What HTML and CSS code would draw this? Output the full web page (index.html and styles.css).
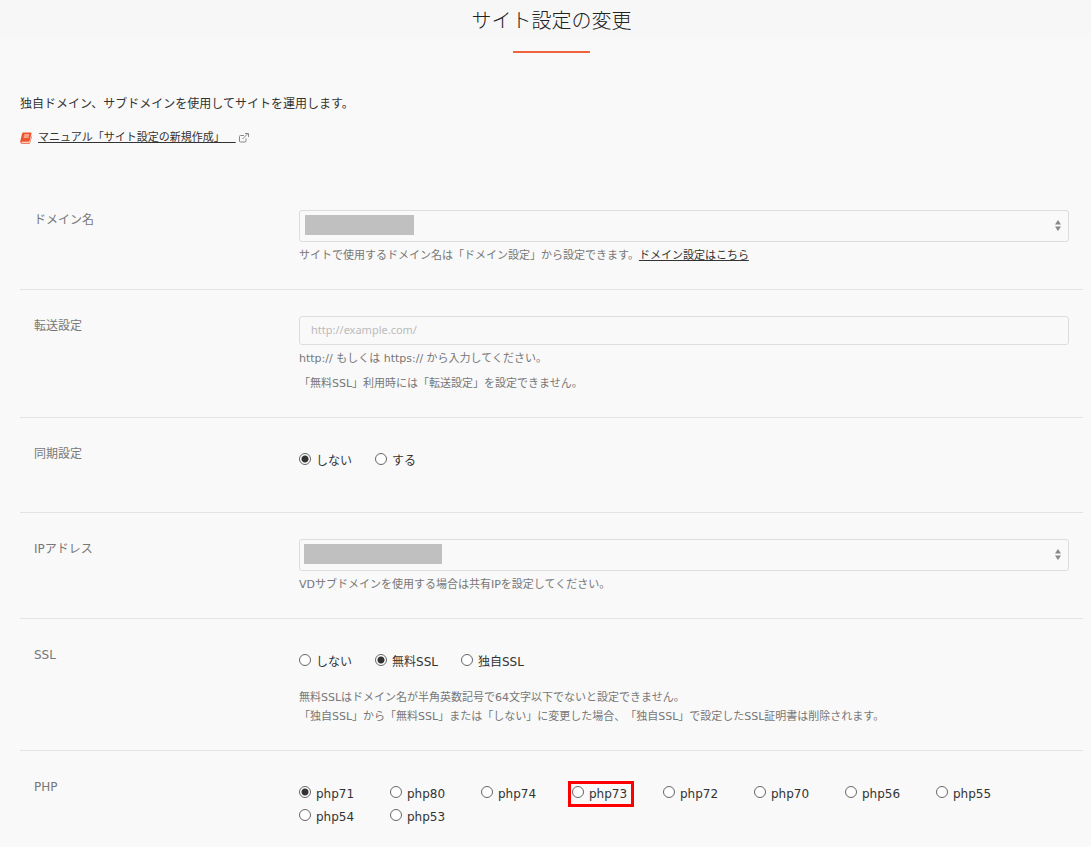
FILE: index.html
```html
<!DOCTYPE html>
<html lang="ja">
<head>
<meta charset="utf-8">
<meta name="viewport" content="width=device-width, initial-scale=1">
<title>サイト設定の変更</title>
<link rel="stylesheet" href="styles.css">
</head>
<body>
<header class="page-header"><h1>サイト設定の変更</h1></header>
<main class="page">
  <div class="accent"></div>
  <p class="lead">独自ドメイン、サブドメインを使用してサイトを運用します。</p>
  <p class="manual">
    <svg class="book" viewBox="0 0 12 12" aria-hidden="true"><path fill="#f0532d" d="M3.3.5h7.500q.9 0 .7.9L9.700 9q-.2.7-.9.7H2.200q-.7 0-.7.5t.8.5h7l.6-.5L11.400 4q.6.3.4 1L10.200 10.800q-.2.900-1.200.900H2Q.2 11.700.2 9.800L2 1.700Q2.200.5 3.300.5z"/><path stroke="#fff" stroke-width=".9" d="M4.300 3h4.900M3.800 5h4.900"/></svg>
    <a href="#manual">マニュアル「サイト設定の新規作成」&#12288;</a>
    <svg class="external" viewBox="0 0 10 10" aria-hidden="true"><path fill="none" stroke="#888" d="M5 2.500H1.500Q.5 2.500.5 3.500V8q0 1 1 1H6q1 0 1-1V5.500M3.500 6 8.500 1M6 .500h3.500V4"/></svg>
  </p>

  <form class="settings">
    <div class="row">
      <label class="name" for="domain">ドメイン名</label>
      <div class="field">
        <div class="select">
          <select id="domain"><option></option></select>
          <span class="mask mask-domain"></span>
          <svg class="arrows" viewBox="0 0 6 11" aria-hidden="true"><path fill="#888" d="M3 0 6 4.500H0zM0 6.500h6L3 11z"/></svg>
        </div>
        <p class="note">サイトで使用するドメイン名は「ドメイン設定」から設定できます。<a href="#domain-settings">ドメイン設定はこちら</a></p>
      </div>
    </div>

    <div class="row">
      <label class="name" for="forward">転送設定</label>
      <div class="field">
        <input class="text" id="forward" type="text" placeholder="http://example.com/">
        <p class="note">http:// もしくは https:// から入力してください。</p>
        <p class="note spaced">「無料SSL」利用時には「転送設定」を設定できません。</p>
      </div>
    </div>

    <div class="row" role="radiogroup" aria-labelledby="sync-name">
      <span class="name" id="sync-name">同期設定</span>
      <div class="field">
        <div class="choices">
          <label><input type="radio" name="sync" checked>しない</label>
          <label><input type="radio" name="sync">する</label>
        </div>
      </div>
    </div>

    <div class="row">
      <label class="name" for="ip">IPアドレス</label>
      <div class="field">
        <div class="select">
          <select id="ip"><option></option></select>
          <span class="mask mask-ip"></span>
          <svg class="arrows" viewBox="0 0 6 11" aria-hidden="true"><path fill="#888" d="M3 0 6 4.500H0zM0 6.500h6L3 11z"/></svg>
        </div>
        <p class="note">VDサブドメインを使用する場合は共有IPを設定してください。</p>
      </div>
    </div>

    <div class="row" role="radiogroup" aria-labelledby="ssl-name">
      <span class="name" id="ssl-name">SSL</span>
      <div class="field">
        <div class="choices">
          <label><input type="radio" name="ssl">しない</label>
          <label><input type="radio" name="ssl" checked>無料SSL</label>
          <label><input type="radio" name="ssl">独自SSL</label>
        </div>
        <p class="note flush">無料SSLはドメイン名が半角英数記号で64文字以下でないと設定できません。</p>
        <p class="note">「独自SSL」から「無料SSL」または「しない」に変更した場合、「独自SSL」で設定したSSL証明書は削除されます。</p>
      </div>
    </div>

    <div class="row" role="radiogroup" aria-labelledby="php-name">
      <span class="name" id="php-name">PHP</span>
      <div class="field">
        <div class="choices versions">
          <label><input type="radio" name="php" checked>php71</label>
          <label><input type="radio" name="php">php80</label>
          <label><input type="radio" name="php">php74</label>
          <label class="marked"><input type="radio" name="php">php73</label>
          <label><input type="radio" name="php">php72</label>
          <label><input type="radio" name="php">php70</label>
          <label><input type="radio" name="php">php56</label>
          <label><input type="radio" name="php">php55</label>
          <label><input type="radio" name="php">php54</label>
          <label><input type="radio" name="php">php53</label>
        </div>
      </div>
    </div>
  </form>
</main>
</body>
</html>
```
FILE: styles.css
```css
* { box-sizing: border-box; }
body {
  margin: 0;
  background: #f9f9f9;
  color: #333;
  font: 12px/18px "DejaVu Sans", "Noto Sans CJK JP", sans-serif;
  text-spacing-trim: space-all;
}
p, h1 { margin: 0; }
a { color: #333; text-decoration: underline; text-underline-offset: 1px; }

.page-header { padding: 1px 0 0 12px; background: #f7f7f7; }
h1 { color: #222; font-size: 20px; font-weight: 300; line-height: 38px; text-align: center; font-family: "Noto Sans CJK JP", sans-serif; }
.page { padding: 12px 8px 0 20px; }
.accent { width: 77px; height: 2px; margin: 0 auto 42px; background: #f0633c; }

.manual { display: flex; align-items: center; margin: 16px 0 37px; font-size: 11px; }
.book { width: 12px; height: 12px; margin-right: 6px; }
.external { width: 10px; height: 10px; margin-left: 3px; }

.row {
  display: grid;
  grid-template-columns: 265px minmax(0, 1fr);
  padding: 26px 14px 24px;
  border-bottom: 1px solid #e3e3e3;
}
.row:last-child { border-bottom: 0; padding-bottom: 0; }
.name { color: #777; line-height: 20px; }

.select { position: relative; }
.select select, .text {
  display: block;
  width: 100%;
  margin: 0;
  border: 1px solid #ddd;
  border-radius: 3px;
  background: #f9f9f9;
}
.select select { height: 32px; padding: 0 20px 0 8px; appearance: none; }
.mask { position: absolute; top: 5px; background: #c0c0c0; height: 20px; pointer-events: none; }
.mask-domain { left: 6px; width: 109px; }
.mask-ip { left: 5px; width: 138px; }
.arrows { position: absolute; right: 8px; top: 10px; width: 6px; height: 11px; pointer-events: none; }
.text { height: 29px; padding: 0 11px 2px; font: 11px/18px "Noto Sans", sans-serif; color: #333; }
.text::placeholder { color: #bbb; }

.note { margin-top: 5px; color: #777; font-size: 11px; }
.spaced { margin-top: 7px; }
.flush { margin-top: 0; }
.flush + .note { margin-top: 1px; }

.choices { display: flex; flex-wrap: wrap; gap: 5px 23px; padding: 8px 0 18px; }
.choices label { display: inline-flex; align-items: center; justify-self: start; white-space: nowrap; }
.choices input {
  appearance: none;
  width: 12px;
  height: 12px;
  margin: 0 5px 4px 0;
  border: 1px solid #666;
  border-radius: 50%;
  background: #fff;
}
.choices input:checked { background: radial-gradient(circle, #333 0 3px, #fff 4px); }
.versions { display: grid; grid-template-columns: repeat(auto-fill, 91px); gap: 5px 0; }
.marked { padding-right: 3px; outline: 3px solid #f00; outline-offset: 1px; }
```
